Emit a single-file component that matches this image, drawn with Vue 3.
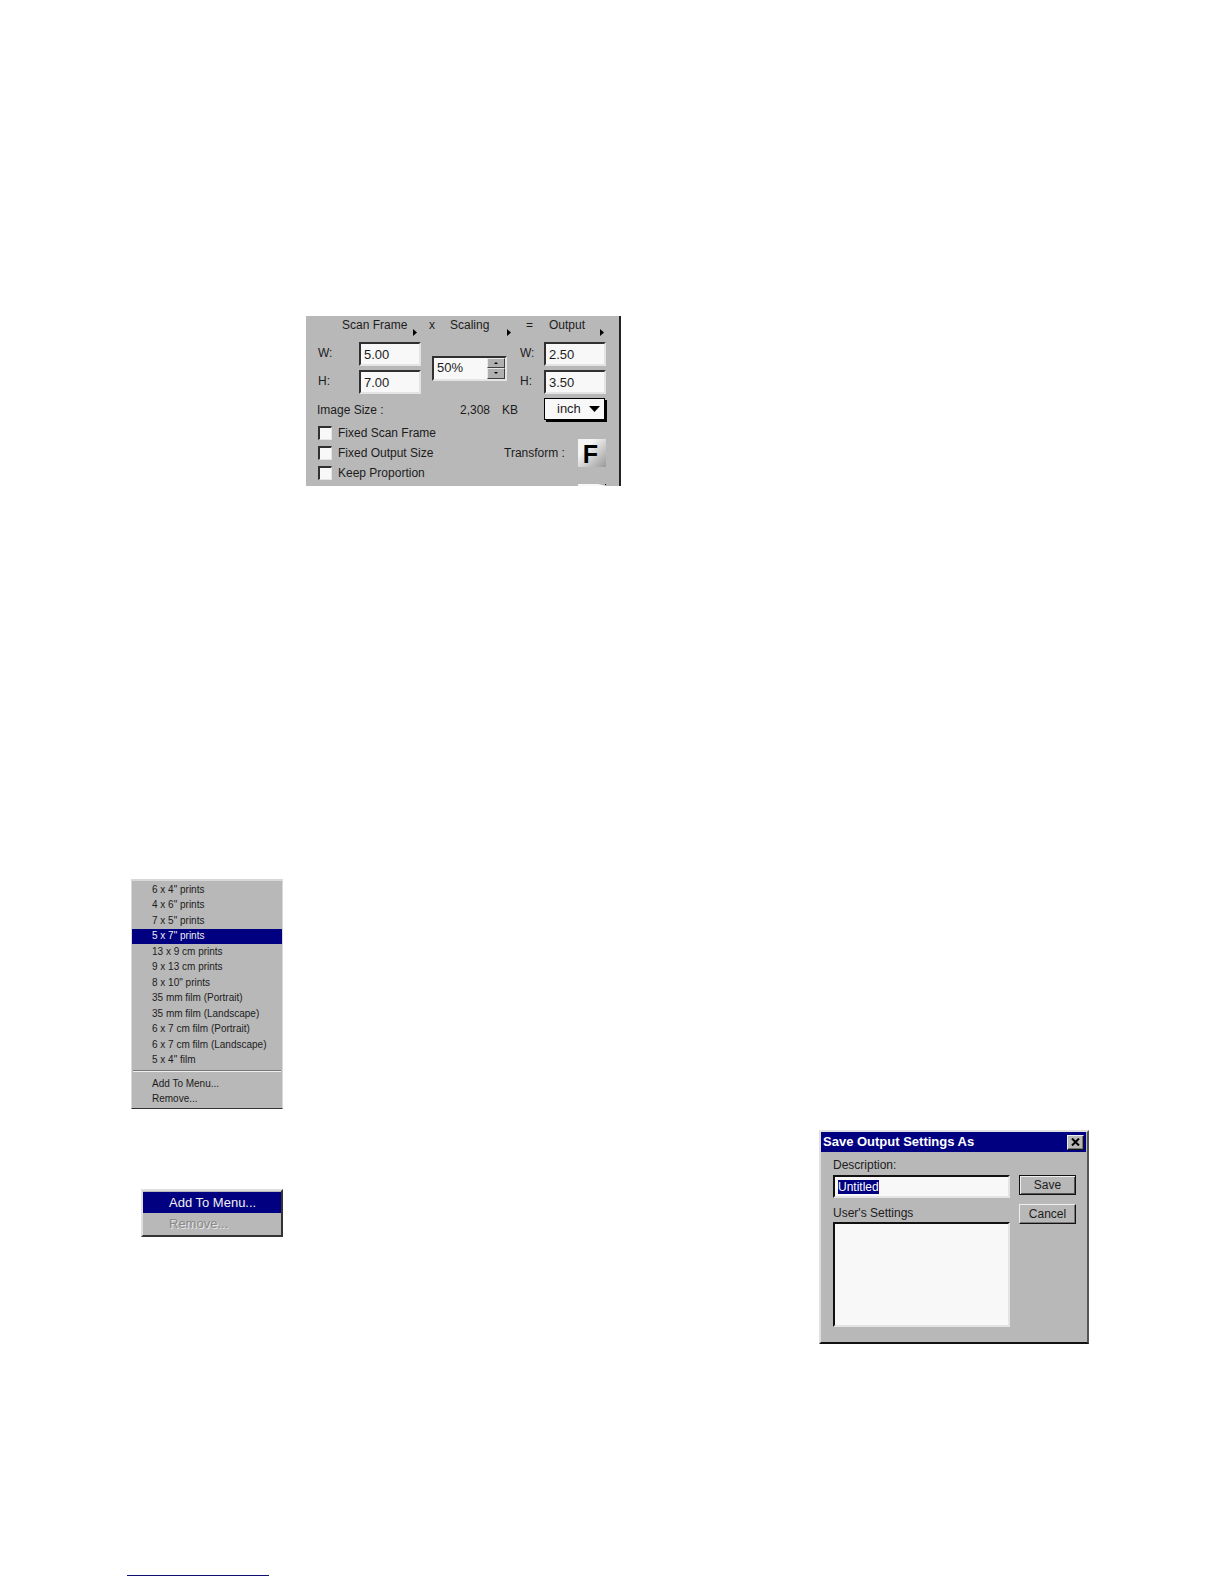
<script setup>
import { onMounted, ref } from 'vue'

const scan = ref({ w: '5.00', h: '7.00' })
const output = ref({ w: '2.50', h: '3.50' })
const scaling = ref('50%')
const description = ref('Untitled')
const descriptionBox = ref(null)

const options = ['Fixed Scan Frame', 'Fixed Output Size', 'Keep Proportion']
const sizes = [
  '6 x 4" prints',
  '4 x 6" prints',
  '7 x 5" prints',
  '5 x 7" prints',
  '13 x 9 cm prints',
  '9 x 13 cm prints',
  '8 x 10" prints',
  '35 mm film (Portrait)',
  '35 mm film (Landscape)',
  '6 x 7 cm film (Portrait)',
  '6 x 7 cm film (Landscape)',
  '5 x 4" film'
]
const selectedSize = ref('5 x 7" prints')

onMounted(() => {
  descriptionBox.value.focus({ preventScroll: true })
  descriptionBox.value.select()
})
</script>

<template>
  <main class="page">
    <section class="panel" aria-label="Scan settings">
      <header class="heads">
        <button class="head wide">Scan Frame<svg width="4" height="7"><path d="M0 0L4 3.5L0 7Z" /></svg></button>
        <span>x</span>
        <button class="head mid">Scaling<svg width="4" height="7"><path d="M0 0L4 3.5L0 7Z" /></svg></button>
        <span>=</span>
        <button class="head">Output<svg width="4" height="7"><path d="M0 0L4 3.5L0 7Z" /></svg></button>
      </header>

      <div class="fields">
        <div class="pair">
          <label for="scan-w">W:</label><input id="scan-w" v-model="scan.w" class="sunken" />
          <label for="scan-h">H:</label><input id="scan-h" v-model="scan.h" class="sunken" />
        </div>
        <div class="scale sunken">
          <input v-model="scaling" aria-label="Scaling" />
          <div class="spin">
            <button aria-label="Increase"><svg width="4" height="2"><path d="M0 2L2 0L4 2Z" /></svg></button>
            <button aria-label="Decrease"><svg width="4" height="2"><path d="M0 0L2 2L4 0Z" /></svg></button>
          </div>
        </div>
        <div class="pair narrow">
          <label for="out-w">W:</label><input id="out-w" v-model="output.w" class="sunken" />
          <label for="out-h">H:</label><input id="out-h" v-model="output.h" class="sunken" />
        </div>
      </div>

      <div class="size-row">
        <span class="size-label">Image Size :</span>
        <span class="size-value">2,308</span>
        <span class="size-unit">KB</span>
        <div class="unit">
          <select aria-label="Unit"><option>inch</option></select>
          <svg width="11" height="6"><path d="M0 0H11L5.5 6Z" /></svg>
        </div>
      </div>

      <div class="lower">
        <div class="checks">
          <label v-for="name in options" :key="name"><input type="checkbox" />{{ name }}</label>
        </div>
        <span class="transform-label">Transform :</span>
        <div class="transform">
          <button class="letter" aria-label="Transform">F</button>
          <svg width="28" height="2"><path d="M0 0L20 0L28 2H0Z" fill="#f8f8f8" /><path d="M27 0h1v1h-1z" /></svg>
        </div>
      </div>
    </section>

    <div class="lists">
      <div class="menus">
        <nav class="menu sizes" aria-label="Frame sizes">
          <div class="size-list">
            <button
              v-for="size in sizes"
              :key="size"
              :class="{ active: size === selectedSize }"
              @click="selectedSize = size"
            >{{ size }}</button>
          </div>
          <hr />
          <div class="size-actions">
            <button>Add To Menu...</button>
            <button>Remove...</button>
          </div>
        </nav>
        <nav class="menu actions" aria-label="Menu actions">
          <button class="active">Add To Menu...</button>
          <button disabled>Remove...</button>
        </nav>
      </div>

      <section class="dialog" role="dialog" aria-labelledby="dialog-title">
        <header class="title-bar">
          <h2 id="dialog-title">Save Output Settings As</h2>
          <button class="close" aria-label="Close">
            <svg width="9" height="8"><path d="M1 0.5L8 7.5M8 0.5L1 7.5" stroke="#000" stroke-width="2" /></svg>
          </button>
        </header>
        <div class="dialog-body">
          <div class="form">
            <label for="description">Description:</label>
            <input id="description" ref="descriptionBox" v-model="description" class="sunken" />
            <label for="settings">User's Settings</label>
            <select id="settings" class="sunken" size="5"></select>
          </div>
          <div class="buttons">
            <button class="default">Save</button>
            <button>Cancel</button>
          </div>
        </div>
      </section>
    </div>

    <hr class="foot" />
  </main>
</template>

<style>
body {
  margin: 0;
  background: #fff;
}
</style>

<style scoped>
* {
  box-sizing: border-box;
}
.page {
  padding: 316px 135px 8px 127px;
  font: 12px/16px "Liberation Sans", Arial, sans-serif;
  color: #1c1c1c;
}
button,
input,
select {
  margin: 0;
  padding: 0;
  border: 0;
  border-radius: 0;
  outline: 0;
  background: none;
  font: inherit;
  color: inherit;
}
button {
  display: flex;
  align-items: center;
}
svg {
  display: block;
  flex: none;
}
.sunken {
  border: solid;
  border-width: 2px;
  border-color: #303030 #e4e4e4 #e4e4e4 #303030;
  background: #f8f8f8;
}

/* Scan settings panel */
.panel {
  width: 315px;
  margin-left: 179px;
  border-right: 2px solid #222;
  background: #b8b8b8;
}
.heads {
  display: grid;
  grid-template-columns: 87px 21px 76px 23px 54px;
  padding: 1px 0 0 36px;
  height: 20px;
}
.head {
  justify-content: space-between;
  height: 18px;
  padding-bottom: 2px;
  width: 55px;
}
.head svg {
  align-self: flex-end;
  margin-bottom: -3px;
}
.head.wide {
  width: 75px;
}
.head.mid {
  width: 61px;
}
.fields {
  display: flex;
  align-items: center;
  gap: 11px;
  padding: 6px 0 0 12px;
}
.pair {
  display: grid;
  grid-template-columns: 41px 62px;
  gap: 4px 0;
}
.pair label {
  padding-top: 3px;
}
.pair.narrow {
  grid-template-columns: 24px 62px;
  margin-left: 2px;
}
.pair input {
  width: 62px;
  height: 24px;
  padding-left: 3px;
  font-size: 13px;
}
.scale {
  display: flex;
  width: 75px;
  height: 25px;
}
.scale input {
  flex: 1;
  min-width: 0;
  padding-left: 3px;
  font-size: 13px;
}
.spin {
  display: flex;
  flex-direction: column;
  width: 18px;
}
.spin button {
  flex: 1;
  justify-content: center;
  border: 1px solid;
  border-color: #e8e8e8 #404040 #404040 #e8e8e8;
  background: #b0b0b0;
}
.size-row {
  display: flex;
  align-items: center;
  padding: 4px 0 0 11px;
}
.size-label {
  width: 143px;
}
.size-value {
  width: 42px;
}
.size-unit {
  width: 42px;
}
.unit {
  display: flex;
  align-items: center;
  width: 61px;
  height: 22px;
  margin-bottom: 2px;
  padding-right: 4px;
  border: 1px solid #000;
  background: #f8f8f8;
  box-shadow: 2px 2px 0 #000;
}
.unit select {
  flex: 1;
  padding-left: 12px;
  appearance: none;
  font-size: 13px;
}
.lower {
  display: flex;
  padding: 2px 0 0 12px;
  height: 64px;
}
.checks {
  display: flex;
  flex-direction: column;
  gap: 4px;
  width: 186px;
  padding-top: 1px;
}
.checks label {
  display: flex;
  align-items: center;
  gap: 6px;
}
.checks input {
  appearance: none;
  width: 14px;
  height: 14px;
  border: solid;
  border-width: 2px 1px 1px 2px;
  border-color: #303030 #e4e4e4 #e4e4e4 #303030;
  background: #f8f8f8;
}
.transform-label {
  width: 74px;
  padding-top: 21px;
}
.transform {
  display: flex;
  flex-direction: column;
  justify-content: space-between;
  padding-top: 15px;
}
.letter {
  justify-content: center;
  width: 28px;
  height: 28px;
  padding: 2px 3px 0 0;
  background: linear-gradient(135deg, #f4f4f4 30%, #999);
  font-size: 25px;
  font-weight: bold;
  color: #000;
}

/* Pop-up menus */
.lists {
  display: flex;
  justify-content: space-between;
  align-items: flex-end;
  margin-top: 393px;
}
.menus {
  display: flex;
  flex-direction: column;
  align-items: flex-end;
  gap: 80px;
  width: 156px;
  margin-bottom: 107px;
}
.menu {
  background: #b8b8b8;
}
.menu button {
  width: 100%;
  white-space: nowrap;
}
.menu .active {
  background: #000080;
  color: #f0f0f0;
}
.sizes {
  width: 152px;
  height: 230px;
  border: 1px solid #d8d8d8;
  border-top-width: 2px;
  border-bottom-color: #333;
  font-size: 10px;
}
.sizes button {
  flex: 1;
  min-height: 0;
  padding-left: 20px;
}
.size-list {
  display: flex;
  flex-direction: column;
  height: 187px;
  padding-top: 1px;
}
.sizes hr {
  height: 2px;
  margin: 2px 1px 4px;
  border: solid;
  border-width: 1px 0;
  border-color: #777 transparent #eee;
}
.size-actions {
  display: flex;
  flex-direction: column;
  height: 31px;
}
.actions {
  width: 142px;
  border: 2px solid;
  border-color: #e0e0e0 #333 #333 #e0e0e0;
  padding: 1px 0;
  font-size: 13px;
}
.actions button {
  height: 21px;
  padding-left: 26px;
}
.actions button:disabled {
  color: #888;
  text-shadow: 1px 1px 0 #e8e8e8;
}

/* Save dialog */
.dialog {
  width: 270px;
  height: 214px;
  border: 2px solid;
  border-color: #e0e0e0 #555 #111 #e0e0e0;
  background: #b8b8b8;
}
.title-bar {
  display: flex;
  align-items: center;
  justify-content: space-between;
  height: 20px;
  margin: 0 1px 0 0;
  padding: 0 2px;
  background: #000080;
  color: #fff;
}
.title-bar h2 {
  margin: 0;
  font-size: 13px;
}
.close,
.buttons button {
  justify-content: center;
  border: 1px solid;
  border-color: #eee #111 #111 #eee;
  background: #b8b8b8;
  box-shadow: inset -1px -1px 0 #777;
}
.close {
  width: 17px;
  height: 15px;
}
.dialog-body {
  display: flex;
  gap: 9px;
  padding: 4px 10px 4px 12px;
}
.form {
  display: flex;
  flex-direction: column;
  width: 177px;
}
.form label {
  height: 18px;
  padding-top: 1px;
}
.form .sunken {
  border-color: #111 #e4e4e4 #e4e4e4 #111;
}
.form input {
  height: 23px;
  margin: 1px 0 6px;
  padding-left: 3px;
}
.form input::selection {
  background: #000080;
  color: #fff;
}
.form select {
  height: 105px;
  overflow: hidden;
}
.buttons {
  display: flex;
  flex-direction: column;
  gap: 9px;
  padding-top: 19px;
}
.buttons button {
  width: 57px;
  height: 20px;
}
.buttons .default {
  border-color: #111;
  box-shadow: inset 1px 1px 0 #eee, inset -1px -1px 0 #555;
}

.foot {
  width: 142px;
  height: 1px;
  margin: 231px 0 0;
  border: 0;
  background: #101070;
}
</style>
